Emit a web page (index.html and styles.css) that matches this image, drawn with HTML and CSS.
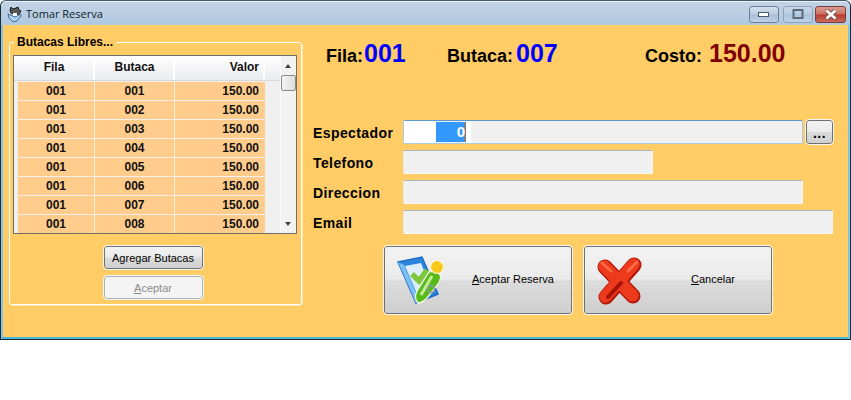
FILE: index.html
```html
<html>
<head>
    <meta charset="UTF-8">
    <title>Tomar Reserva</title>
    <link rel="stylesheet" href="styles.css">
</head>

<body>
    <div class="window">
        <div class="titlebar">
            <svg class="app-icon" width="16" height="18" viewBox="0 0 16 18">
                <path d="M4 2l2 2 3-1 2-1 1 3 2 1-2 3-4 1-4-2-1-3z" fill="#5a5a5a" stroke="#1c1c1c" stroke-width="1"/>
                <path d="M1 9l7 3 6-3 0 2-4 5-4 1-4-4z" fill="#a8d0f4" stroke="#4a6a8a" stroke-width="1"/>
                <path d="M6 8h4v3H6z" fill="#fff"/>
            </svg>
            <span class="title">Tomar Reserva</span>
            <div class="win-buttons">
                <div class="win-btn">
                    <svg width="12" height="7" viewBox="0 0 12 7"><rect x="0.500" y="1.500" width="10" height="4" fill="#fff" stroke="#46586c"/></svg>
                </div>
                <div class="win-btn win-max">
                    <svg width="12" height="10" viewBox="0 0 12 10"><rect x="1.500" y="1" width="9" height="8" fill="none" stroke="#5a6878" stroke-width="2"/></svg>
                </div>
                <div class="win-btn win-close">
                    <svg width="16" height="11" viewBox="0 0 16 11"><path d="M3.500 1.500l9 8M12.500 1.500l-9 8" stroke="#6a4a4a" stroke-width="4.400"/><path d="M3.500 1.500l9 8M12.500 1.500l-9 8" stroke="#fff" stroke-width="2.800"/></svg>
                </div>
            </div>
        </div>

        <div class="client">
            <fieldset class="group">
                <legend>Butacas Libres...</legend>
                <div class="grid-box">
                    <div class="grid">
                        <div class="grid-head">
                            <div class="col-a">Fila</div>
                            <div class="col-b">Butaca</div>
                            <div class="col-c">Valor</div>
                            <div class="col-rest"></div>
                        </div>
                        <div class="grid-row"><div class="col-a">001</div><div class="col-b">001</div><div class="col-c">150.00</div></div>
                        <div class="grid-row"><div class="col-a">001</div><div class="col-b">002</div><div class="col-c">150.00</div></div>
                        <div class="grid-row"><div class="col-a">001</div><div class="col-b">003</div><div class="col-c">150.00</div></div>
                        <div class="grid-row"><div class="col-a">001</div><div class="col-b">004</div><div class="col-c">150.00</div></div>
                        <div class="grid-row"><div class="col-a">001</div><div class="col-b">005</div><div class="col-c">150.00</div></div>
                        <div class="grid-row"><div class="col-a">001</div><div class="col-b">006</div><div class="col-c">150.00</div></div>
                        <div class="grid-row"><div class="col-a">001</div><div class="col-b">007</div><div class="col-c">150.00</div></div>
                        <div class="grid-row"><div class="col-a">001</div><div class="col-b">008</div><div class="col-c">150.00</div></div>
                    </div>
                    <div class="scrollbar">
                        <div class="arrow-up"></div>
                        <div class="thumb"></div>
                        <div class="arrow-down"></div>
                    </div>
                </div>
                <div class="group-buttons">
                    <button class="btn">Agregar Butacas</button>
                    <button class="btn btn-off"><u>A</u>ceptar</button>
                </div>
            </fieldset>

            <div class="main">
                <div class="summary">
                    <div class="sum-fila"><span class="sum-label">Fila:</span><span class="sum-num">001</span></div>
                    <div class="sum-butaca"><span class="sum-label">Butaca:</span><span class="sum-num">007</span></div>
                    <div class="sum-costo"><span class="sum-label">Costo:</span><span class="sum-cost">150.00</span></div>
                </div>

                <div class="form">
                    <div class="form-row">
                        <label>Espectador</label>
                        <div class="input input-focus input-wide"><span class="input-white"></span><span class="input-sel">0</span><span class="input-caret"></span><span class="input-tail"></span></div>
                        <button class="btn btn-dots">...</button>
                    </div>
                    <div class="form-row">
                        <label>Telefono</label>
                        <div class="input input-phone"></div>
                    </div>
                    <div class="form-row">
                        <label>Direccion</label>
                        <div class="input input-wide"></div>
                    </div>
                    <div class="form-row">
                        <label>Email</label>
                        <div class="input input-full"></div>
                    </div>
                </div>

                <div class="actions">
                    <button class="big-btn">
                        <svg class="big-icon" width="56" height="56" viewBox="0 0 56 56">
                            <path d="M6 10L30 5l16 37-22 9z" fill="#2a84de" stroke="#1f6cc4" stroke-width="1.500"/>
                            <path d="M13 14l16-3 11 28-14 5z" fill="#dceefa"/>
                            <path d="M6 10l6 3 14 32-2 6z" fill="#7cbef4"/>
                            <path d="M20 22l7 7 8-11" fill="none" stroke="#7cc83a" stroke-width="5.500"/>
                            <path d="M26 51c-3-3-3-8-1-12l12-19 8-2 4 7-2 6-12 15c-3 3-6 5-9 5z" fill="#58ba18" stroke="#f0f8e4" stroke-width="1.400"/>
                            <path d="M29 43l11-19" stroke="#c4ec94" stroke-width="3" fill="none"/>
                            <circle cx="39" cy="37" r="3.500" fill="none" stroke="#8a98a8" stroke-width="1.500"/>
                            <circle cx="45" cy="15" r="6.500" fill="#f8c81c" stroke="#fff8d8" stroke-width="1.200"/>
                        </svg>
                        <span class="big-text big-text-a"><u>A</u>ceptar Reserva</span>
                    </button>
                    <button class="big-btn">
                        <svg class="big-icon" width="56" height="56" viewBox="0 0 56 56">
                            <path d="M13 15l28 29M42 13L14 45" stroke="#b01608" stroke-width="15" stroke-linecap="round"/>
                            <path d="M12.500 14.500l28 29M41.500 12.500L13.500 44.500" stroke="#ee3a1c" stroke-width="12.500" stroke-linecap="round"/>
                            <path d="M29 31L16 45" stroke="#a81206" stroke-width="4" stroke-linecap="round"/>
                            <path d="M10 11l9 8M45 10l-9 9" stroke="#ff6a44" stroke-width="3" stroke-linecap="round"/>
                        </svg>
                        <span class="big-text big-text-c"><u>C</u>ancelar</span>
                    </button>
                </div>
            </div>
        </div>
    </div>
</body>
</html>
```

FILE: styles.css
```css
body {
    margin: 0;
    background: #ffffff;
    font-family: "Liberation Sans", Arial, sans-serif;
}

.window {
    width: 851px;
    height: 340px;
    box-sizing: border-box;
    border: 1px solid #1c2a38;
    border-top-color: #4a5a6a;
    border-radius: 6px 6px 0 0;
    background: #8fc8e8;
    display: flex;
    flex-direction: column;
}

.titlebar {
    height: 24px;
    flex: none;
    display: flex;
    align-items: center;
    padding-left: 6px;
    background: linear-gradient(to bottom, #c2d3e5 0, #b8cde2 60%, #adc8e3 100%);
    border-radius: 6px 6px 0 0;
    border-top: 1px solid #e8f0f8;
    box-sizing: border-box;
}

.app-icon {
    margin-right: 2px;
}

.title {
    font-family: "Open Sans", sans-serif;
    font-size: 11px;
    color: #101c28;
    margin-left: 1px;
}

.win-buttons {
    margin-left: auto;
    margin-right: 4px;
    margin-top: 1px;
    display: flex;
    gap: 4px;
}

.win-btn {
    width: 30px;
    height: 17px;
    box-sizing: border-box;
    border: 1px solid #6b7f96;
    border-radius: 3px;
    background: linear-gradient(to bottom, #d4e0ec 0, #bccde0 48%, #a8bdd6 52%, #bed2e6 100%);
    display: flex;
    align-items: center;
    justify-content: center;
}

.win-max {
    background: linear-gradient(to bottom, #c8d8e8 0, #b8cce0 48%, #aec4dc 52%, #bcd2e8 100%);
    border-color: #8ea2b8;
}

.win-close {
    width: 31px;
    margin-left: -2px;
    border-color: #7a3c3c;
    background: linear-gradient(to bottom, #dc9c90 0, #cc7062 48%, #b83a2c 52%, #c86a5c 100%);
}

.client {
    flex: 1;
    display: flex;
    background: #ffcc66;
    margin: 0 1px 0 1px;
    border-bottom: 2px solid #4fb6d8;
    border-right: 1px solid #7cc0de;
    border-left: 1px solid #7cc0de;
    padding: 10px 0 0 6px;
}

/* panel de butacas */
.group {
    width: 293px;
    height: 270px;
    box-sizing: border-box;
    margin: 0;
    padding: 0 3px;
    border: 1px solid #ffffff;
    border-radius: 3px;
    box-shadow: 1px 1px 0 #ffe4ac;
    flex: none;
}

.group legend {
    font-size: 12px;
    font-weight: bold;
    color: #000;
    padding: 0 3px;
    margin-left: 1px;
    line-height: 14px;
}

.grid-box {
    width: 284px;
    height: 179px;
    margin-top: 6px;
    box-sizing: border-box;
    border: 1px solid #6e6e6e;
    background: #f0f0f0;
    display: flex;
}

.grid {
    width: 266px;
    flex: none;
}

.grid-head {
    display: flex;
    height: 24px;
    background: linear-gradient(to bottom, #ffffff 0, #f4f4f6 55%, #e8ebef 100%);
    border-bottom: 1px solid #d8d8d8;
    font-size: 12px;
    font-weight: bold;
    line-height: 23px;
    color: #111;
}

.grid-row {
    display: flex;
    height: 18px;
    margin: 0 0 1px 4px;
    font-size: 12px;
    font-weight: bold;
    line-height: 19px;
    color: #111;
    width: 247px;
}

.grid-row:nth-child(2) {
    margin-top: 1px;
}

.grid-row div {
    background: #ffcc8c;
    border-right: 1px solid #fff0dc;
    box-sizing: border-box;
}

.grid-head div { box-sizing: border-box; }
.grid-head .col-a { width: 81px; border-right: 2px solid #ffffff; text-align: center; padding-left: 1px; }
.grid-head .col-b { width: 80px; border-right: 2px solid #ffffff; text-align: center; padding-left: 1px; }
.grid-head .col-c { width: 90px; border-right: 2px solid #ffffff; text-align: right; padding-right: 4px; }
.grid-head .col-rest { flex: 1; }

.grid-row .col-a { width: 77px; text-align: center; }
.grid-row .col-b { width: 80px; text-align: center; }
.grid-row .col-c { width: 90px; text-align: right; padding-right: 6px; border-right: none; }

.scrollbar {
    width: 17px;
    margin-left: auto;
    position: relative;
    background: #f2f2f2;
    border-left: 1px solid #fafafa;
    box-sizing: border-box;
}

.thumb {
    position: absolute;
    top: 19px;
    left: 0;
    width: 15px;
    height: 16px;
    border: 1px solid #8a8a8a;
    border-radius: 2px;
    box-sizing: border-box;
    background: linear-gradient(to right, #f4f4f4, #dcdcdc);
}

.arrow-up, .arrow-down {
    position: absolute;
    left: 4px;
    width: 0;
    height: 0;
    border-left: 3px solid transparent;
    border-right: 3px solid transparent;
}

.arrow-up {
    top: 8px;
    border-bottom: 4px solid #404040;
}

.arrow-down {
    bottom: 7px;
    border-top: 4px solid #404040;
}

.group-buttons {
    display: flex;
    flex-direction: column;
    align-items: center;
    gap: 7px;
    margin-top: 12px;
    padding-right: 5px;
}

.btn {
    width: 99px;
    height: 23px;
    padding: 0;
    font-family: "Liberation Sans", sans-serif;
    font-size: 11px;
    color: #000;
    border: 1px solid #707070;
    border-radius: 3px;
    outline: 1px solid #f4f4f4;
    outline-offset: 0;
    background: linear-gradient(to bottom, #f2f2f2 0, #ebebeb 48%, #dcdcdc 52%, #cfcfcf 100%);
}

.btn-off {
    color: #8a8a8a;
    border-color: #adb2b5;
    background: #f4f4f4;
}

/* lado derecho */
.main {
    flex: 1;
    padding-left: 10px;
    display: flex;
    flex-direction: column;
}

.summary {
    height: 85px;
    flex: none;
    display: flex;
    align-items: flex-start;
}

.sum-fila { margin-left: 14px; margin-top: 4px; width: 121px; }
.sum-butaca { margin-top: 4px; width: 198px; }
.sum-costo { margin-top: 4px; }

.sum-label {
    font-size: 18px;
    font-weight: bold;
    color: #000;
}

.sum-num {
    font-size: 25px;
    font-weight: bold;
    color: #0000ff;
    margin-left: 1px;
}

.sum-butaca .sum-num { margin-left: 3px; }

.sum-cost {
    font-size: 25px;
    font-weight: bold;
    color: #800000;
    margin-left: 7px;
}

.form {
    display: flex;
    flex-direction: column;
    gap: 6px;
}

.form-row {
    display: flex;
    align-items: center;
    height: 24px;
}

.form-row label {
    width: 90px;
    margin-left: 1px;
    padding-top: 2px;
    flex: none;
    font-size: 14px;
    font-weight: bold;
    letter-spacing: 0.4px;
    color: #000;
}

.input {
    height: 24px;
    box-sizing: border-box;
    background: #f0f0f0;
    border: 1px solid #f8f8f8;
    border-top-color: #a8b4c0;
    border-left-color: #e2e8ee;
    border-radius: 2px;
    display: flex;
    font-size: 15px;
}

.input-wide { width: 400px; }
.input-phone { width: 250px; }
.input-full { width: 430px; }

.input-focus {
    border-color: #5a9ac8 #a8cce4 #a8cce4 #a8cce4;
    padding: 1px 0;
}

.input-white {
    width: 32px;
    background: #fff;
    margin-top: -1px;
    margin-bottom: -1px;
}

.input-sel {
    width: 29px;
    background: #3399ff;
    color: #fff;
    font-weight: bold;
    text-align: right;
    line-height: 19px;
    height: 20px;
}

.input-caret {
    width: 1px;
    height: 20px;
    background: #c06a20;
}

.input-tail {
    width: 5px;
    background: #fff;
    margin-top: -1px;
    margin-bottom: -1px;
}

.btn-dots {
    width: 27px;
    height: 24px;
    margin-left: 3px;
    font-size: 14px;
    font-weight: bold;
    letter-spacing: 0.5px;
    line-height: 20px;
    padding-top: 1px;
}

.actions {
    display: flex;
    gap: 12px;
    margin-top: 12px;
    padding-left: 72px;
}

.big-btn {
    width: 188px;
    height: 68px;
    padding: 0;
    position: relative;
    font-family: "Liberation Sans", sans-serif;
    font-size: 11px;
    color: #000;
    border: 1px solid #707070;
    border-radius: 3px;
    outline: 1px solid #f8f8f8;
    background: linear-gradient(to bottom, #f2f2f2 0, #ebebeb 48%, #dcdcdc 52%, #cfcfcf 100%);
}

.big-icon {
    position: absolute;
    left: 7px;
    top: 5px;
}

.big-text {
    position: absolute;
    top: 26px;
    white-space: nowrap;
}

.big-text-a { left: 87px; }
.big-text-c { left: 106px; }
```
